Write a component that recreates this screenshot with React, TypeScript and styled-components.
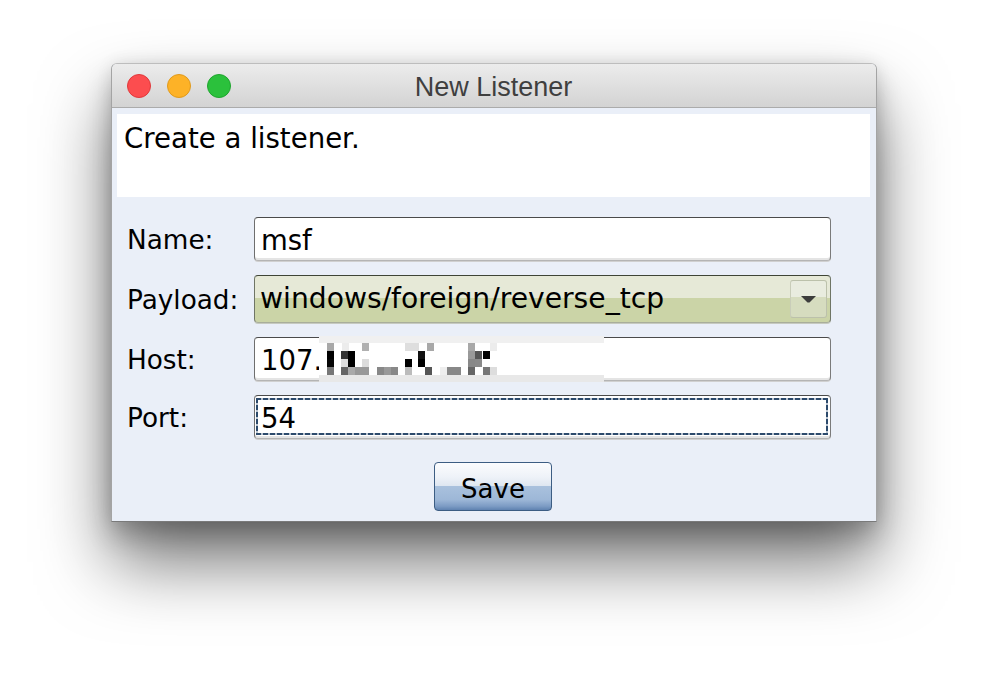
import React from "react";
import styled, { createGlobalStyle } from "styled-components";

const GlobalStyle = createGlobalStyle`
  html, body { margin: 0; padding: 0; background: #ffffff; }
  body { width: 988px; height: 682px; overflow: hidden; }
  * { box-sizing: border-box; }
`;

const Page = styled.div`
  padding: 63px 0 0 111px;
`;

const Window = styled.div`
  width: 766px;
  height: 459px;
  border: 1px solid #a4a4a4;
  border-top-color: #bdbdbd;
  border-bottom-color: #7a7a7a;
  border-radius: 6px 6px 0 0;
  display: flex;
  flex-direction: column;
  background: #eaeff8;
  box-shadow: 0 40px 70px rgba(0, 0, 0, 0.55), 0 14px 26px rgba(0, 0, 0, 0.2),
    0 0 16px rgba(0, 0, 0, 0.08);
`;

const TitleBar = styled.div`
  height: 44px;
  flex: none;
  display: grid;
  grid-template-columns: 1fr auto 1fr;
  align-items: center;
  border-bottom: 1px solid #ababab;
  border-radius: 5px 5px 0 0;
  background: linear-gradient(#ececec, #d3d3d3);
`;

const Lights = styled.div`
  display: flex;
  gap: 16px;
  padding-left: 15px;
  padding-top: 1px;
`;

const Light = styled.span<{ $fill: string; $edge: string }>`
  width: 24px;
  height: 24px;
  border-radius: 50%;
  background: ${(p) => p.$fill};
  border: 1px solid ${(p) => p.$edge};
`;

const Title = styled.div`
  font-family: "Liberation Sans", Arial, sans-serif;
  font-size: 27px;
  color: #3f3f3f;
  padding-top: 3px;
  padding-right: 1px;
`;

const Body = styled.div`
  flex: 1;
  padding: 6px 6px 10px 5px;
  display: flex;
  flex-direction: column;
  font-family: "DejaVu Sans", sans-serif;
  color: #000;
`;

const Description = styled.div`
  height: 83px;
  background: #ffffff;
  padding: 10px 7px;
  font-size: 27.6px;
  line-height: 30px;
`;

const Form = styled.div`
  margin-top: 20px;
  display: grid;
  grid-template-columns: 127px 577px;
  padding-left: 10px;
  row-gap: 14px;
  align-items: center;
`;

const Label = styled.div`
  font-size: 26.3px;
  line-height: 30px;
  padding-top: 2px;
`;

const Field = styled.div<{ $focused?: boolean }>`
  position: relative;
  height: 44px;
  border: 1px solid #8c8c8c;
  border-top-color: #4a4a4a;
  border-left-color: #6e6e6e;
  border-right-color: #7a7a7a;
  border-bottom-color: #b4b4b4;
  border-radius: 4px;
  background: #ffffff;
  box-shadow: inset 0 -2px 0 #e4e4e4, 0 1px 0 #d0d0d0;
  display: flex;
  align-items: center;
  padding-left: 6px;
  padding-top: 2px;
  font-size: 27.5px;
  ${(p) =>
    p.$focused
      ? `
  &::after {
    content: "";
    position: absolute;
    left: 1px; top: 2px; right: 2px; bottom: 3px;
    background:
      repeating-linear-gradient(90deg, #2c4a6c 0 5px, #b9c3cf 5px 7px) top / 100% 2px no-repeat,
      repeating-linear-gradient(90deg, #2c4a6c 0 5px, #b9c3cf 5px 7px) bottom / 100% 2px no-repeat,
      repeating-linear-gradient(180deg, #2c4a6c 0 5px, #b9c3cf 5px 7px) left / 2px 100% no-repeat,
      repeating-linear-gradient(180deg, #2c4a6c 0 5px, #b9c3cf 5px 7px) right / 2px 100% no-repeat;
  }`
      : ""}
`;

const Combo = styled.div`
  height: 48px;
  border: 1px solid #6f7565;
  border-top-color: #3f4536;
  border-bottom-color: #a9ae9b;
  border-radius: 4px;
  background: linear-gradient(#e6e9d7 0 48%, #cbd4a7 48% 100%);
  box-shadow: 0 1px 0 #c6cac0;
  display: flex;
  align-items: center;
  padding-left: 5px;
  padding-right: 3px;
  font-size: 28.2px;
`;

const ComboText = styled.span`
  flex: 1;
  padding-bottom: 1px;
`;

const ArrowButton = styled.div`
  width: 37px;
  height: 38px;
  border: 1px solid #bcc1ab;
  border-left-color: #c9cdb9;
  border-radius: 3px;
  background: linear-gradient(#e9ecdf 0 45%, #d6dcbf 45% 100%);
  display: flex;
  align-items: center;
  justify-content: center;
`;

const Mosaic = styled.div`
  position: absolute;
  left: 64px;
  top: -2px;
  width: 285px;
  height: 46px;
  background: linear-gradient(#f0f0f0 0 7px, #ffffff 7px 39px, #e8e8e8 39px 46px);
`;

const Cell = styled.span`
  position: absolute;
  width: 7px;
  height: 8px;
`;

const ButtonRow = styled.div`
  margin-top: 23px;
  display: flex;
  justify-content: center;
`;

const SaveButton = styled.button`
  width: 118px;
  height: 49px;
  margin-right: 1px;
  border: 1px solid #3c5d83;
  border-radius: 4px;
  background: linear-gradient(
    #fbfcfe 0%,
    #eef2f8 30%,
    #dfe7f1 48%,
    #a9c1dd 50%,
    #9db7d7 78%,
    #7c9bc4 92%,
    #5f82b0 100%
  );
  font-family: "DejaVu Sans", sans-serif;
  font-size: 26px;
  color: #000;
  padding: 4px 0 0;
`;

const cells: [number, number, string][] = [
  [8, 7, "#a8a8a8"],
  [23, 7, "#ececec"],
  [43, 7, "#b0b0b0"],
  [86, 7, "#dedede"],
  [93, 7, "#dedede"],
  [108, 7, "#a8a8a8"],
  [149, 7, "#a8a8a8"],
  [171, 7, "#ececec"],
  [8, 15, "#000000"],
  [22, 15, "#333333"],
  [29, 15, "#000000"],
  [99, 15, "#111111"],
  [149, 15, "#999999"],
  [156, 15, "#555555"],
  [164, 15, "#000000"],
  [8, 23, "#050505"],
  [22, 23, "#dddddd"],
  [29, 23, "#000000"],
  [43, 23, "#dcdcdc"],
  [86, 23, "#000000"],
  [99, 23, "#000000"],
  [149, 23, "#888888"],
  [156, 23, "#8a8a8a"],
  [8, 31, "#777777"],
  [22, 31, "#666666"],
  [29, 31, "#aaaaaa"],
  [36, 31, "#999999"],
  [43, 31, "#999999"],
  [58, 31, "#888888"],
  [65, 31, "#999999"],
  [72, 31, "#888888"],
  [86, 31, "#bbbbbb"],
  [106, 31, "#555555"],
  [121, 31, "#eeeeee"],
  [128, 31, "#888888"],
  [135, 31, "#888888"],
  [149, 31, "#666666"],
  [164, 31, "#777777"],
  [171, 31, "#dddddd"],
];

export default function App() {
  return (
    <Page>
      <GlobalStyle />
      <Window>
        <TitleBar>
          <Lights>
            <Light $fill="#fc4d4f" $edge="#e0393b" />
            <Light $fill="#fdb227" $edge="#e09a1c" />
            <Light $fill="#2bc13c" $edge="#1fa52e" />
          </Lights>
          <Title>New Listener</Title>
          <div />
        </TitleBar>
        <Body>
          <Description>Create a listener.</Description>
          <Form>
            <Label>Name:</Label>
            <Field>msf</Field>
            <Label>Payload:</Label>
            <Combo>
              <ComboText>windows/foreign/reverse_tcp</ComboText>
              <ArrowButton>
                <svg width="15" height="7" viewBox="0 0 15 7">
                  <path d="M0 0 H15 L8.5 6.5 H6.5 Z" fill="#3d3d3d" />
                </svg>
              </ArrowButton>
            </Combo>
            <Label>Host:</Label>
            <Field>
              107.
              <Mosaic>
                {cells.map(([x, y, c], i) => (
                  <Cell key={i} style={{ left: x, top: y, background: c }} />
                ))}
              </Mosaic>
            </Field>
            <Label>Port:</Label>
            <Field $focused>54</Field>
          </Form>
          <ButtonRow>
            <SaveButton>Save</SaveButton>
          </ButtonRow>
        </Body>
      </Window>
    </Page>
  );
}
